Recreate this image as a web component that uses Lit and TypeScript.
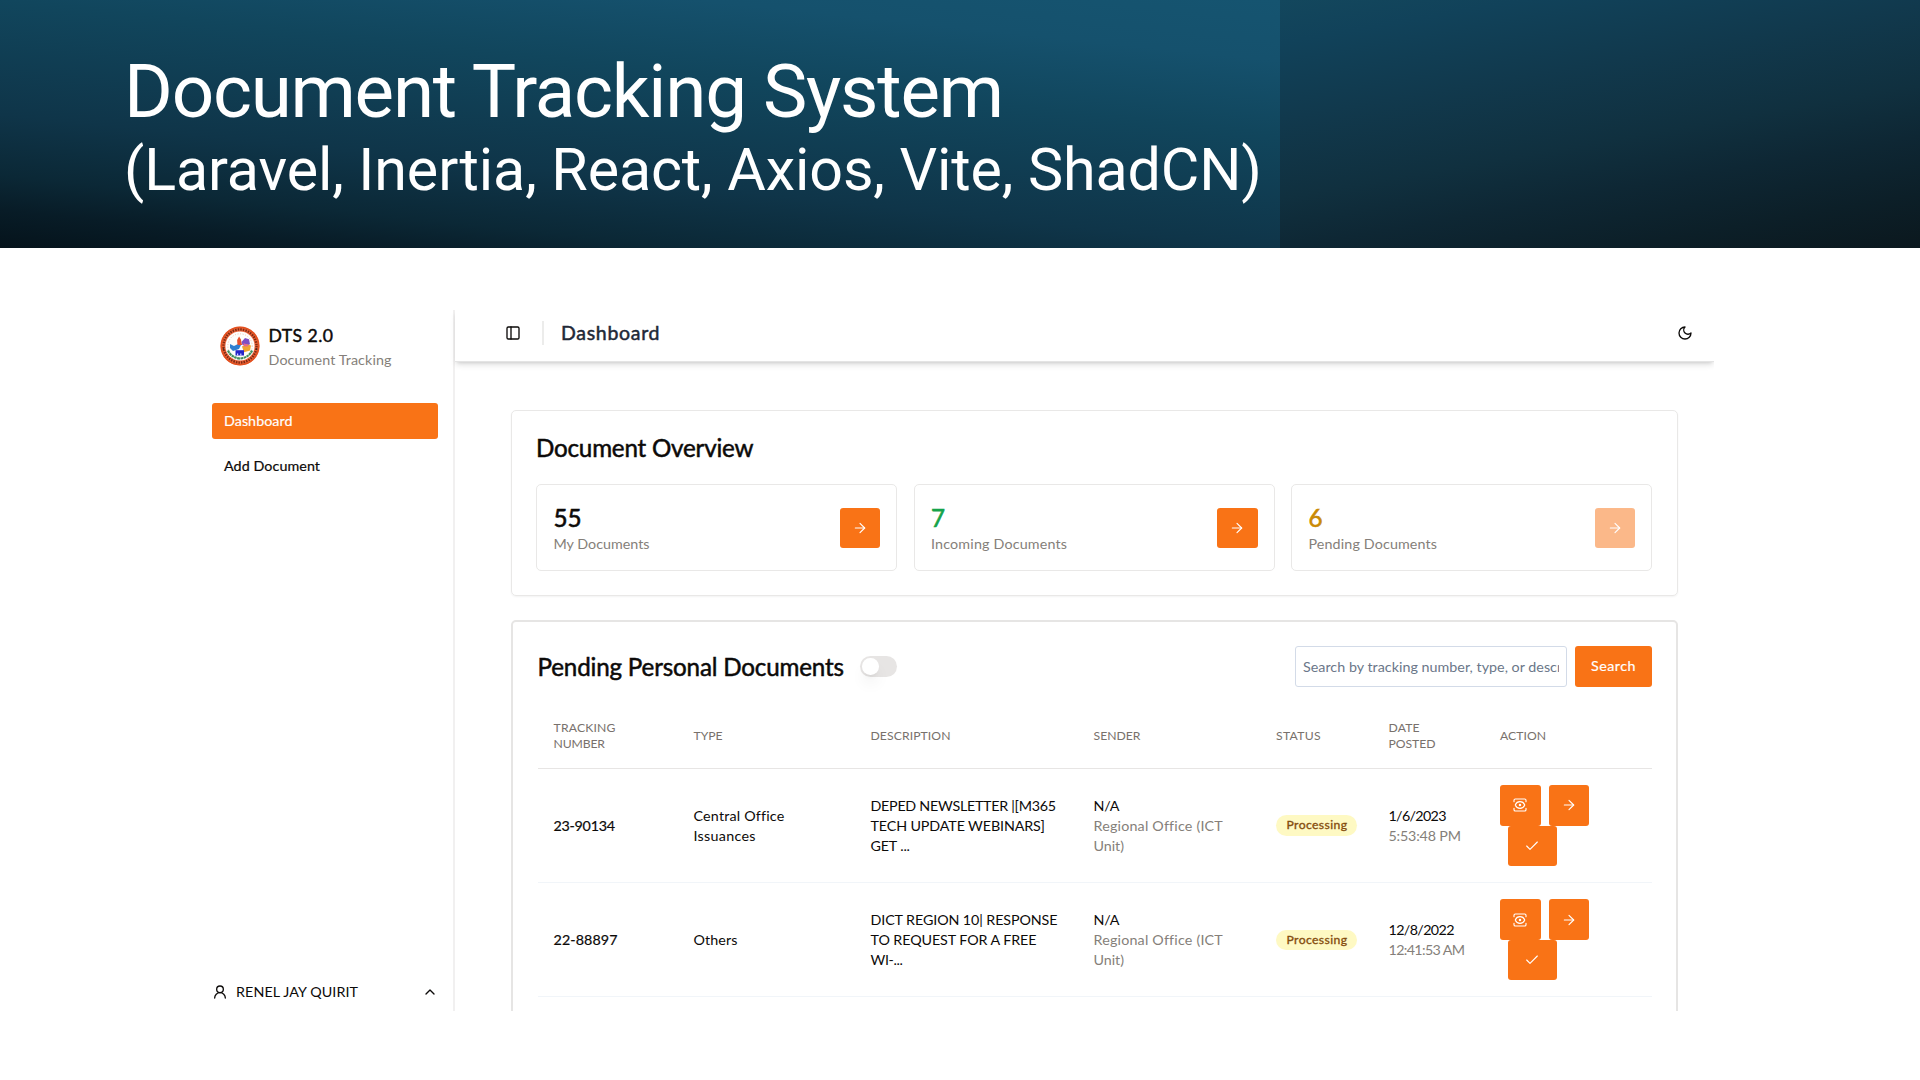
import { LitElement, html, css, svg } from "lit";
import { customElement, property, query } from "lit/decorators.js";

/** One line of text, letter-spaced to a given width. */
@customElement("fit-text")
class FitText extends LitElement {
  @property({ type: Number }) w = 0;
  @property() text = "";
  @query("span") line!: HTMLSpanElement;

  static styles = css`
    :host { display: block; white-space: nowrap; }
    span { display: inline-block; }
  `;

  updated() {
    const natural = this.line.getBoundingClientRect().width;
    const gaps = Math.max(1, this.text.length - 1);
    if (this.w) this.line.style.letterSpacing = `${((this.w - natural) / gaps).toFixed(3)}px`;
  }

  render() {
    return html`<span>${this.text}</span>`;
  }
}

const icons: Record<string, unknown> = {
  panel: svg`<rect x="3" y="3" width="18" height="18" rx="2"/><path d="M9 3v18"/>`,
  moon: svg`<path d="M12 3a6 6 0 0 0 9 9 9 9 0 1 1-9-9Z"/>`,
  arrow: svg`<path d="M5 12h14"/><path d="m12 5 7 7-7 7"/>`,
  check: svg`<path d="M20 6 9 17l-5-5"/>`,
  view: svg`<path d="M21 17v2a2 2 0 0 1-2 2H5a2 2 0 0 1-2-2v-2"/><path d="M21 7V5a2 2 0 0 0-2-2H5a2 2 0 0 0-2 2v2"/><circle cx="12" cy="12" r="1"/><path d="M18.944 12.33a1 1 0 0 0 0-.66 7.5 7.5 0 0 0-13.888 0 1 1 0 0 0 0 .66 7.5 7.5 0 0 0 13.888 0"/>`,
  user: svg`<circle cx="12" cy="8" r="5"/><path d="M20 21a8 8 0 0 0-16 0"/>`,
  up: svg`<path d="m18 15-6-6-6 6"/>`,
};
const icon = (name: string) => html`<svg class="icon" viewBox="0 0 24 24">${icons[name]}</svg>`;
const t = (text: string, w: number, cls = "") => html`<fit-text class=${cls} .text=${text} .w=${w}></fit-text>`;

type Line = [string, number];
interface Doc { no: Line; type: Line[]; desc: Line[]; date: Line; time: Line }

const docs: Doc[] = [
  {
    no: ["23-90134", 61.5],
    type: [["Central Office", 90], ["Issuances", 62]],
    desc: [["DEPED NEWSLETTER |[M365", 185.5], ["TECH UPDATE WEBINARS]", 174.5], ["GET ...", 39.5]],
    date: ["1/6/2023", 58], time: ["5:53:48 PM", 72.5],
  },
  {
    no: ["22-88897", 64],
    type: [["Others", 44]],
    desc: [["DICT REGION 10| RESPONSE", 187], ["TO REQUEST FOR A FREE", 166], ["WI-...", 32.5]],
    date: ["12/8/2022", 66], time: ["12:41:53 AM", 76.5],
  },
];

const stats = [
  { n: "55", nw: 28, label: "My Documents", w: 96, tone: "black", off: false },
  { n: "7", nw: 0, label: "Incoming Documents", w: 136, tone: "green", off: false },
  { n: "6", nw: 0, label: "Pending Documents", w: 128.5, tone: "amber", off: true },
];

@customElement("app-root")
class AppRoot extends LitElement {
  static styles = css`
    :host {
      display: flex; flex-direction: column; width: 1920px; height: 1080px; overflow: hidden;
      background: #fff; color: #0c0a09; font: 14.3px/20.33px Lato, "Open Sans", sans-serif;
    }
    * { box-sizing: border-box; }
    .icon { display: block; width: 16px; height: 16px; fill: none; stroke: currentColor; stroke-width: 2; stroke-linecap: round; stroke-linejoin: round; }

    .banner { height: 248px; flex: none; display: flex; }
    .left { width: 1280px; height: 248px; padding: 49px 0 0 124px; color: #fff; font-family: Roboto, "Liberation Sans", sans-serif;
      background: linear-gradient(186deg, #155470 0%, #15516d 16%, #11465d 35%, #0f3549 65%, #0b2836 81%, #081c27 90%, #05131b 100%); }
    .right { flex: 1;
      background: linear-gradient(170deg, #13475d 0%, #11425a 12%, #11394d 33%, #10303f 55%, #0e2734 69%, #0c1f28 85%, #0b181e 100%); }
    .h1 { font-size: 74.5px; line-height: 86px; }
    .h2 { font-size: 59.2px; line-height: 70px; }

    .app { display: flex; width: 1514px; height: 701px; margin: 62px 0 0 200px; overflow: hidden; }
    .side { width: 255px; flex: none; border-right: 2px solid #f1f0f0; padding: 12px 15.5px 8px 11.5px; display: flex; flex-direction: column; }
    .brand { display: flex; align-items: center; gap: 9px; height: 48px; padding-left: 8px; }
    .brand-text { padding-top: 2px; }
    .seal { width: 40px; height: 40px; display: block; }
    .brand-name { font-size: 17.6px; line-height: 25px; -webkit-text-stroke: .45px #0c0a09; }
    .muted { color: #857f7a; }
    .brand-sub { line-height: 24px; }
    .nav { display: flex; flex-direction: column; gap: 8px; margin-top: 32.5px; }
    .nav-item { height: 36.5px; padding: 8.5px 12.5px 0; border-radius: 3px; -webkit-text-stroke: .2px currentColor; }
    .active { background: #f97316; color: #fff; }
    .user { margin-top: auto; display: flex; align-items: center; height: 22px; }
    .user fit-text { margin-left: 8.5px; flex: 1; }

    .main { flex: 1; display: flex; flex-direction: column; min-width: 0; }
    .top { height: 52px; flex: none; display: flex; align-items: center; padding: 0 21px 6px 50px; border-bottom: 1px solid #e4e4e4;
      box-shadow: 0 4px 6px -1px rgba(0,0,0,.11), 0 2px 4px -2px rgba(0,0,0,.16); }
    .sep { width: 1.5px; height: 24px; background: #ececeb; margin: 0 17.5px 0 21px; }
    .page-title { flex: 1; font-size: 19.5px; line-height: 26px; color: #1f2937; -webkit-text-stroke: .5px #1f2937; }

    .content { padding: 48px 36px 0 56px; display: flex; flex-direction: column; gap: 24px; }
    .card { border: 1px solid #e9e8e7; border-radius: 5px; padding: 24px; box-shadow: 0 1px 2px rgba(0,0,0,.05); }
    .overview { height: 186px; }
    h2 { margin: 0; font-weight: 400; font-size: 24.2px; line-height: 26px; -webkit-text-stroke: .5px #0c0a09; }
    .stats { display: grid; grid-template-columns: 361px 361px 361px; gap: 16.5px; margin-top: 23px; }
    .stat { height: 87px; border: 1px solid #e9e8e7; border-radius: 5px; padding: 1px 16px 0 16.5px; display: flex; align-items: center; justify-content: space-between; }
    .num { font-size: 24.2px; line-height: 32px; -webkit-text-stroke: .6px currentColor; }
    .black { color: #0c0a09; }
    .green { color: #16a34a; }
    .amber { color: #ca8a04; }
    .btn { width: 40.5px; height: 40.5px; background: #f97316; color: #fff; border-radius: 3px; display: flex; align-items: center; justify-content: center; }
    .btn .icon { stroke-width: 1.7; }
    .off { opacity: .5; }

    .pending { border: 2px solid #e6e5e4; padding: 24px 24px 0 24.5px; height: 440px; box-shadow: none; }
    .bar { display: flex; align-items: center; height: 41px; }
    .switch { width: 36.5px; height: 20.5px; border-radius: 11px; background: #e7e5e4; padding: 2px; margin-left: 16.5px; }
    .knob { width: 16.5px; height: 16.5px; border-radius: 50%; background: #fff; box-shadow: 0 10px 15px -3px rgba(0,0,0,.1), 0 4px 6px -4px rgba(0,0,0,.1); }
    .search { margin: 0 0 0 auto; width: 272px; height: 41px; border: 1.5px solid #d3dbe8; border-radius: 3px; padding: 0 7px; font: inherit; letter-spacing: .02px; background: #fff; outline: none; }
    .search::placeholder { color: #6b7789; opacity: 1; }
    .go { width: 77px; height: 41px; margin-left: 8px; -webkit-text-stroke: .2px #fff; }

    .row { display: grid; grid-template-columns: 140px 177px 223px 182.5px 112.5px 111.5px 1fr; align-items: center; height: 114.2px; padding-left: 16px; border-bottom: 1px solid #f1f5f9; }
    .head { height: 65px; margin-top: 17px; border-color: #e7e5e4; font-size: 12.2px; line-height: 16.3px; color: #78716c; }
    .strong { -webkit-text-stroke: .2px currentColor; }
    .line-group { padding-top: 1px; }
    .badge { width: 81px; height: 20.5px; border-radius: 11px; background: #fef9c3; color: #854d0e; font-size: 12.2px; line-height: 20px; padding-left: 10.5px; -webkit-text-stroke: .35px #854d0e; }
    .actions { display: flex; flex-wrap: wrap; column-gap: 8px; width: 100px; }
    .wide { width: 48.5px; margin-left: 8px; }
  `;

  seal() {
    return html`<svg class="seal" viewBox="0 0 40 40">
      <circle cx="20" cy="20" r="19.6" fill="#e9633a"/>
      <circle cx="20" cy="20" r="16.6" fill="none" stroke="#7e2a12" stroke-width="2.4" stroke-dasharray="1.5 1.1"/>
      <circle cx="20" cy="20" r="18.6" fill="none" stroke="#e2501e" stroke-width="1.4"/>
      <circle cx="20" cy="20" r="14.6" fill="#fdfdfb"/>
      <circle cx="20" cy="20" r="12.2" fill="none" stroke="#f0b9a0" stroke-width=".9" stroke-dasharray="1 1.6"/>
      <path d="M8 24.5Q11 31.5 20 32.6 29 31.5 32 24.5" fill="none" stroke="#3f8f5d" stroke-width="2.2" stroke-dasharray="2.6 .5"/>
      <path d="M10 18l4 2 4-2 3 1-2 4-6 2-3-3z" fill="#2f7fd0"/>
      <path d="M17.5 19l-.4-5 2-3.6 1.8 3 1.2 5.6z" fill="#e8502b"/>
      <path d="M21.5 16l3.5-4 4 1.2 1 5-3.5 1.6-4-.8z" fill="#7d4fc4"/>
      <path d="M22 20.5l4-2.5 5 1.6-1 5-6 1.6z" fill="#f0a530"/>
      <path d="M23.5 17.3l4 1.2 1 1.8-4.6.3z" fill="#e56a8a"/>
      <path d="M15.5 24.2h8.5v5.3h-8.5z" fill="#2424c8"/>
      <path d="M17 29.5v-2h1.2v2zM20.2 29.5v-2h1.2v2z" fill="#cfd4ff"/>
      <circle cx="3.4" cy="23" r=".8" fill="#222"/><circle cx="36.6" cy="23" r=".8" fill="#222"/>
    </svg>`;
  }

  row(d: Doc) {
    return html`<div class="row">
      ${t(...d.no, "strong line-group")}
      <div class="line-group">${d.type.map((l) => t(...l))}</div>
      <div class="line-group">${d.desc.map((l) => t(...l))}</div>
      <div class="line-group">${t("N/A", 26)}${t("Regional Office (ICT", 128.5, "muted")}${t("Unit)", 30.5, "muted")}</div>
      <div class="badge">${t("Processing", 60.5)}</div>
      <div class="line-group">${t(...d.date)}${t(...d.time, "muted")}</div>
      <div class="actions">
        <div class="btn">${icon("view")}</div>
        <div class="btn">${icon("arrow")}</div>
        <div class="btn wide">${icon("check")}</div>
      </div>
    </div>`;
  }

  render() {
    return html`
      <header class="banner">
        <div class="left">
          ${t("Document Tracking System", 880, "h1")}
          ${t("(Laravel, Inertia, React, Axios, Vite, ShadCN)", 1138, "h2")}
        </div>
        <div class="right"></div>
      </header>
      <div class="app">
        <aside class="side">
          <div class="brand">
            ${this.seal()}
            <div class="brand-text">${t("DTS 2.0", 64.5, "brand-name")}${t("Document Tracking", 123, "brand-sub muted")}</div>
          </div>
          <nav class="nav">
            <div class="nav-item active">${t("Dashboard", 68.5)}</div>
            <div class="nav-item">${t("Add Document", 96)}</div>
          </nav>
          <div class="user">${icon("user")}${t("RENEL JAY QUIRIT", 122)}${icon("up")}</div>
        </aside>
        <main class="main">
          <div class="top">
            ${icon("panel")}<div class="sep"></div>${t("Dashboard", 98.5, "page-title")}${icon("moon")}
          </div>
          <div class="content">
            <section class="card overview">
              <h2>${t("Document Overview", 217.5)}</h2>
              <div class="stats">
                ${stats.map((s) => html`<div class="stat">
                  <div>${t(s.n, s.nw, "num " + s.tone)}${t(s.label, s.w, "muted")}</div>
                  <div class="btn ${s.off ? "off" : ""}">${icon("arrow")}</div>
                </div>`)}
              </div>
            </section>
            <section class="card pending">
              <div class="bar">
                <h2>${t("Pending Personal Documents", 306.5)}</h2>
                <div class="switch"><div class="knob"></div></div>
                <input class="search" placeholder="Search by tracking number, type, or description" />
                <div class="btn go">${t("Search", 44.5)}</div>
              </div>
              <div class="row head">
                <div>${t("TRACKING", 62)}${t("NUMBER", 51.5)}</div>
                ${t("TYPE", 29)}${t("DESCRIPTION", 80)}${t("SENDER", 47)}${t("STATUS", 44.5)}
                <div>${t("DATE", 31)}${t("POSTED", 47)}</div>
                ${t("ACTION", 46)}
              </div>
              ${docs.map((d) => this.row(d))}
            </section>
          </div>
        </main>
      </div>`;
  }
}
